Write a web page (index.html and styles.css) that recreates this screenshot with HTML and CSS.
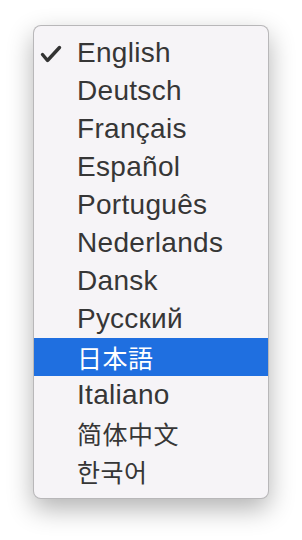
FILE: index.html
```html
<!DOCTYPE html>
<html lang="en">
<head>
    <meta charset="UTF-8">
    <title>Language Menu</title>
    <link rel="stylesheet" href="styles.css">
</head>
<body>

<div class="menu">
    <div class="item checked">
        <span class="check">
            <svg width="22" height="18" viewBox="0 0 22 18"><path d="M2.5 9.5 L7.5 15.5 L19.5 2.5" fill="none" stroke="#333" stroke-width="3.4" stroke-linecap="round" stroke-linejoin="round"/></svg>
        </span>
        English
    </div>
    <div class="item"><span class="check"></span>Deutsch</div>
    <div class="item"><span class="check"></span>Français</div>
    <div class="item"><span class="check"></span>Español</div>
    <div class="item"><span class="check"></span>Português</div>
    <div class="item"><span class="check"></span>Nederlands</div>
    <div class="item"><span class="check"></span>Dansk</div>
    <div class="item"><span class="check"></span>Русский</div>
    <div class="item active cjk" lang="ja"><span class="check"></span>日本語</div>
    <div class="item"><span class="check"></span>Italiano</div>
    <div class="item cjk" lang="zh-CN"><span class="check"></span>简体中文</div>
    <div class="item cjk" lang="ko"><span class="check"></span>한국어</div>
</div>

</body>
</html>
```
FILE: styles.css
```css
html, body {
    height: 100%;
}

body {
    margin: 0;
    padding-top: 25px;
    box-sizing: border-box;
    background: #ffffff;
    font-family: "Liberation Sans", Arial, sans-serif;
}

.menu {
    margin-left: 33px;
    width: 234px;
    padding: 8px 0;
    background: #f6f4f7;
    border: 1px solid rgba(0, 0, 0, 0.25);
    border-radius: 8px;
    box-shadow: 0 10px 26px rgba(0, 0, 0, 0.3);
}

.item {
    display: flex;
    align-items: center;
    height: 38px;
    font-size: 28px;
    letter-spacing: 0.3px;
    color: #363636;
    white-space: nowrap;
}

.check {
    width: 43px;
    flex: none;
    display: flex;
    padding-left: 6px;
    box-sizing: border-box;
}

.check svg {
    display: block;
    margin-top: 1px;
}

.cjk {
    font-family: "Noto Sans CJK JP", "Noto Sans CJK SC", "Noto Sans CJK KR", sans-serif;
    font-size: 25px;
    letter-spacing: 0.5px;
}

.cjk[lang="zh-CN"] {
    font-family: "Noto Sans CJK SC", sans-serif;
}

.cjk[lang="ko"] {
    font-family: "Noto Sans CJK KR", sans-serif;
}

.item.active {
    background: #1f6fe0;
    color: #ffffff;
}
```
